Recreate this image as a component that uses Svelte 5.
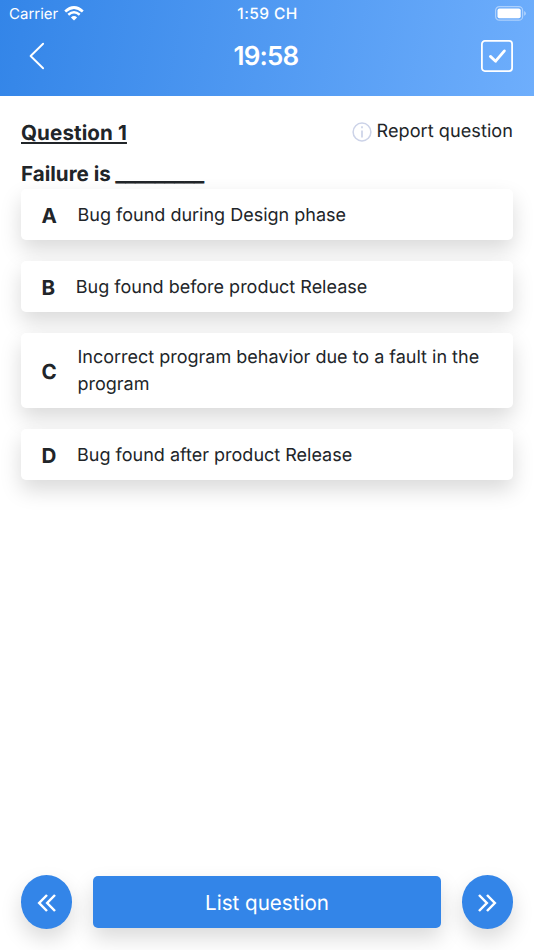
<script>
  const time = "19:58";

  const question = {
    id: 1,
    title: "Failure is",
    blank: "_________",
    options: [
      "Bug found during Design phase",
      "Bug found before product Release",
      "Incorrect program behavior due to a fault in the program",
      "Bug found after product Release",
    ],
  };

  let selected = $state(null);

  function label(idx) {
    return String.fromCharCode(65 + idx);
  }
</script>

<div class="screen">
  <header>
    <div class="status-bar">
      <div class="carrier">
        <span>Carrier</span>
        <svg width="20" height="15" viewBox="0 0 20 15" fill="none" stroke="#fff">
          <path d="M1.2 5.4Q10 -2.4 18.8 5.4" stroke-width="2.7" />
          <path d="M4.3 8.8Q10 3.8 15.7 8.8" stroke-width="2.5" />
          <path d="M10 14.5L6.9 11.4Q10 8.8 13.1 11.4Z" fill="#fff" stroke="none" />
        </svg>
      </div>
      <span class="clock">1:59 CH</span>
      <svg class="battery" width="31" height="15" viewBox="0 0 31 15">
        <rect x=".6" y=".6" width="27" height="13.6" rx="3.8" fill="none" stroke="#fff" stroke-opacity=".45" stroke-width="1.2" />
        <rect x="2.5" y="2.5" width="23.2" height="9.8" rx="2" fill="#fff" />
        <path d="M29.2 5q1.6.7 1.6 2.4t-1.6 2.4z" fill="#fff" fill-opacity=".5" />
      </svg>
    </div>
    <div class="nav-bar">
      <button class="icon-btn back" aria-label="Back">
        <svg width="16" height="28" viewBox="0 0 16 28" fill="none" stroke="#fff" stroke-width="1.9" stroke-linecap="round" stroke-linejoin="round">
          <path d="M14.1 1.7L1.6 14L14.1 26.3" />
        </svg>
      </button>
      <h1>{time}</h1>
      <button class="icon-btn" aria-label="Submit">
        <svg width="32" height="32" viewBox="0 0 32 32" fill="none" stroke="#fff" stroke-linecap="round" stroke-linejoin="round">
          <rect x=".9" y=".9" width="30.2" height="30.2" rx="3" stroke-width="1.8" />
          <path d="M9.4 16.4L14.6 21.2L23.4 10.9" stroke-width="2.8" />
        </svg>
      </button>
    </div>
  </header>

  <main>
    <div class="question-head">
      <h2>Question {question.id}</h2>
      <button class="report">
        <svg width="20" height="20" viewBox="0 0 20 20" fill="none" stroke="#ccd3e8">
          <circle cx="10" cy="10" r="8.9" stroke-width="1.5" />
          <path d="M10 8.6v7M10 4.2v2" stroke-width="1.7" />
        </svg>
        <span>Report question</span>
      </button>
    </div>
    <h3>{question.title} <span class="blank">{question.blank}</span></h3>

    <div class="options">
      {#each question.options as option, idx}
        <button class="option" class:selected={selected === idx} onclick={() => (selected = idx)}>
          <b>{label(idx)}</b>
          <span>{option}</span>
        </button>
      {/each}
    </div>
  </main>

  <footer>
    <button class="round" aria-label="Previous question">
      <svg width="20" height="18" viewBox="0 0 20 18" fill="none" stroke="#fff" stroke-width="2.5">
        <path d="M10 1L2.2 9L10 17M18 1L10.2 9L18 17" />
      </svg>
    </button>
    <button class="list">List question</button>
    <button class="round" aria-label="Next question">
      <svg width="20" height="18" viewBox="0 0 20 18" fill="none" stroke="#fff" stroke-width="2.5">
        <path d="M2 1L9.8 9L2 17M10 1L17.8 9L10 17" />
      </svg>
    </button>
  </footer>
</div>

<style>
  :global(body) {
    margin: 0;
  }
  .screen {
    height: 950px;
    display: flex;
    flex-direction: column;
    overflow: hidden;
    background: #fff;
    color: #212529;
    font-family: Inter, sans-serif;
    text-rendering: geometricPrecision;
  }
  button {
    padding: 0;
    border: 0;
    background: none;
    color: inherit;
    font: inherit;
    text-align: left;
    text-rendering: inherit;
    cursor: pointer;
  }
  svg {
    display: block;
    flex: none;
  }
  h1,
  h2,
  h3 {
    margin: 0;
  }
  header {
    height: 96px;
    background: linear-gradient(100deg, #3385e8, #6eaefc);
    color: #fff;
  }
  .status-bar {
    height: 27px;
    padding: 0 8px 0 9px;
    display: grid;
    grid-template-columns: 1fr auto 1fr;
    align-items: center;
    font-size: 15.5px;
  }
  .carrier {
    display: flex;
    align-items: center;
    gap: 6px;
    font-size: 15px;
  }
  .clock {
    font-weight: 500;
    letter-spacing: 0.4px;
  }
  .battery {
    justify-self: end;
  }
  .nav-bar {
    height: 58px;
    padding: 0 21px 0 29px;
    display: grid;
    grid-template-columns: 204.5px 1fr 40px;
    align-items: center;
  }
  .nav-bar .icon-btn {
    justify-self: end;
  }
  .nav-bar .back {
    justify-self: start;
  }
  h1 {
    font-size: 26px;
    font-weight: 600;
    letter-spacing: -0.8px;
  }
  main {
    flex: 1;
    padding: 21px 21px 0;
  }
  .question-head {
    height: 31px;
    display: flex;
    justify-content: space-between;
    align-items: center;
  }
  h2,
  h3 {
    height: 31px;
    font-size: 20.6px;
    font-weight: 700;
    line-height: 31px;
  }
  h2 {
    letter-spacing: 0.1px;
    text-decoration: underline;
  }
  h3 {
    margin-top: 10px;
  }
  .blank {
    margin-left: -0.5px;
    font-size: 22.2px;
    letter-spacing: -0.75px;
  }
  .report {
    margin-bottom: 3px;
    display: flex;
    align-items: center;
    gap: 5px;
    font-size: 18.1px;
    letter-spacing: 0.05px;
  }
  .report svg {
    margin-top: 1px;
  }
  .options {
    display: flex;
    flex-direction: column;
    gap: 21px;
  }
  .option {
    min-height: 51px;
    padding: 11px 20.6px 10px;
    box-sizing: border-box;
    display: flex;
    align-items: center;
    gap: 20.6px;
    border-radius: 5px;
    background: #fff;
    box-shadow: 0 10px 21px rgba(0, 0, 0, 0.15);
    font-size: 18px;
    line-height: 27px;
  }
  .option b {
    font-size: 20.6px;
  }
  .option.selected {
    background: #e8f2ff;
  }
  footer {
    padding: 0 21px 21px;
    display: flex;
    align-items: center;
    gap: 20.6px;
  }
  .round {
    width: 51.4px;
    height: 54px;
    padding-top: 2px;
    box-sizing: border-box;
    display: flex;
    justify-content: center;
    align-items: center;
    border-radius: 50%;
    background: #3385e8;
    box-shadow: 0 10px 21px rgba(0, 0, 0, 0.15);
  }
  .list {
    flex: 1;
    height: 52px;
    border-radius: 5px;
    background: #3385e8;
    box-shadow: 0 10px 21px rgba(0, 0, 0, 0.15);
    color: #fff;
    font-size: 20.6px;
    text-align: center;
  }
</style>
